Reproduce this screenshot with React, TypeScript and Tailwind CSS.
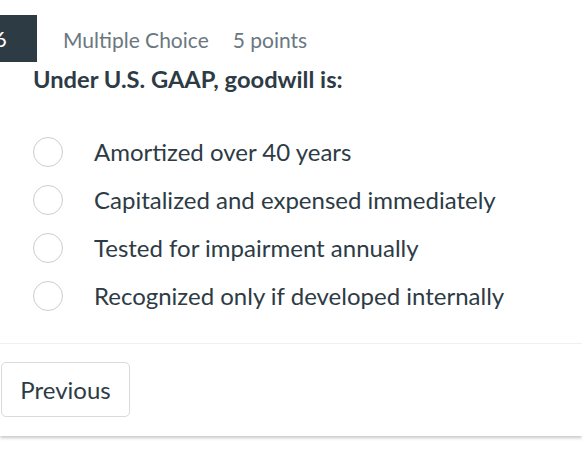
import React from 'react'

const options = [
  'Amortized over 40 years',
  'Capitalized and expensed immediately',
  'Tested for impairment annually',
  'Recognized only if developed internally',
]

export default function App() {
  return (
    <div className="min-h-[459px] bg-white" style={{ fontFamily: 'Lato, "Open Sans", sans-serif' }}>
      <div className="bg-white pt-[15px] pb-[19px] shadow-[0_2px_3px_rgba(0,0,0,0.22)]">
        {/* Header */}
        <div className="flex items-center h-[47px]">
          <div className="w-[37px] h-[47px] bg-[#2d3b45] overflow-hidden flex items-center">
            <span className="-ml-[6px] text-white text-[22px] leading-none">6</span>
          </div>
          <span className="ml-[26px] mt-[3px] text-[21px] text-[#6b7780]">Multiple Choice</span>
          <span className="ml-[24px] mt-[3px] text-[21px] text-[#6b7780]">5 points</span>
        </div>

        {/* Question */}
        <p className="mt-[4px] pl-[33px] text-[23.7px] leading-[26px] font-bold text-[#2d3b45]">
          Under U.S. GAAP, goodwill is:
        </p>

        {/* Answers */}
        <ul className="mt-[36px]">
          {options.map((o) => (
            <li key={o} className="flex items-center h-[48px] pl-[33px]">
              <span className="w-[30px] h-[30px] rounded-full border border-[#c7cdd1] bg-white shrink-0" />
              <span className="ml-[31px] text-[24px] text-[#2d3b45]">{o}</span>
            </li>
          ))}
        </ul>

        <div className="mt-[23px] border-t border-[#f0f0f0]" />

        <div className="mt-[18px] pl-[1px]">
          <button className="w-[129px] h-[55px] rounded-[5px] border border-[#d7dade] bg-white text-[24px] text-[#2d3b45]">
            Previous
          </button>
        </div>
      </div>
    </div>
  )
}
